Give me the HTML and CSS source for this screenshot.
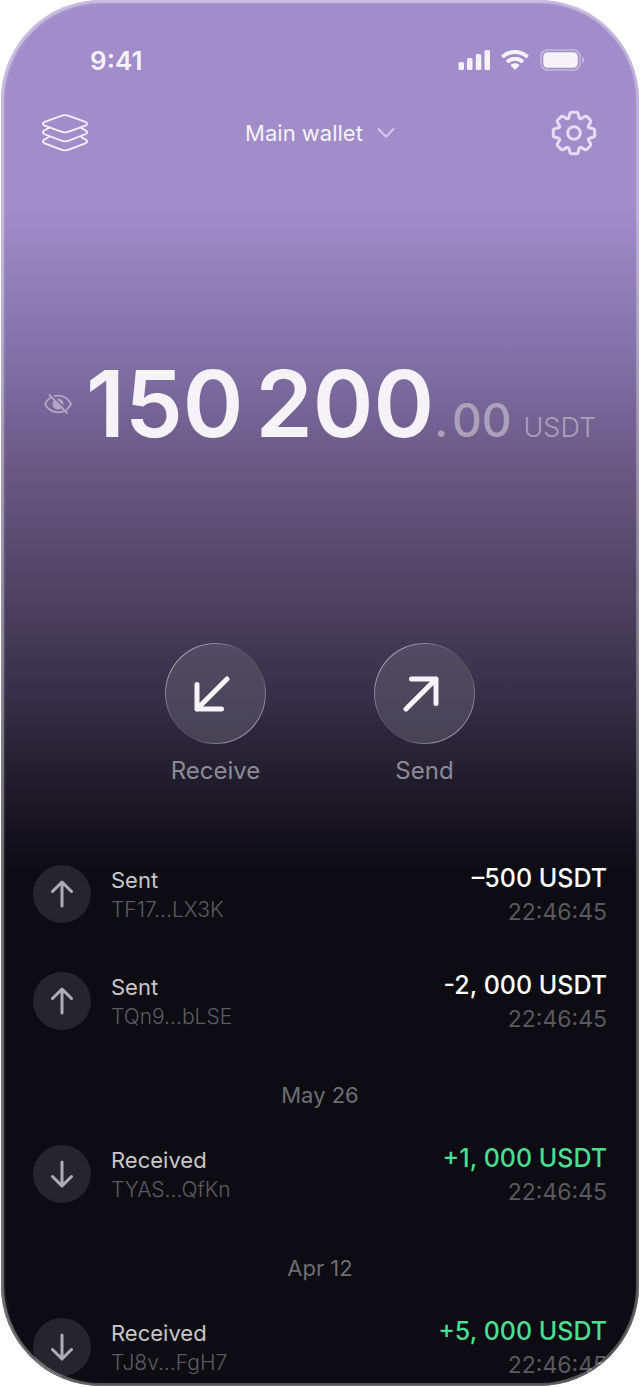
FILE: index.html
```html
<!DOCTYPE html>
<html lang="en">
<head>
    <meta charset="UTF-8">
    <meta name="viewport" content="width=device-width, initial-scale=1.0">
    <title>Main wallet</title>
    <link rel="stylesheet" href="styles.css">
</head>
<body>
    <!-- shared arrow icons -->
    <svg class="sprite" aria-hidden="true">
        <symbol id="arrow-up" viewBox="0 0 28 28">
            <path d="M14 26V2M4.500 11.500L14 2l9.500 9.500"/>
        </symbol>
        <symbol id="arrow-down" viewBox="0 0 28 28">
            <path d="M14 2v24M4.500 16.500L14 26l9.500-9.500"/>
        </symbol>
    </svg>

    <div class="phone">
        <div class="status-bar">
            <span class="time">9:41</span>
            <div class="status-icons">
                <svg width="32" height="22" viewBox="0 0 32 22" fill="currentColor">
                    <rect x="0.500" y="13" width="5.500" height="8" rx="1.600"/>
                    <rect x="9" y="9" width="5.500" height="12" rx="1.600"/>
                    <rect x="17.800" y="5" width="5.500" height="16" rx="1.600"/>
                    <rect x="26.500" y="1" width="5.500" height="20" rx="1.600"/>
                </svg>
                <svg width="28" height="22" viewBox="0 0 28 22" fill="currentColor">
                    <path d="M14 1C8.700 1 4 3 .5 6.300c-.3.300-.3.700 0 1l1.800 1.800c.3.300.7.300 1 0C6.200 6.500 10 5 14 5s7.800 1.500 10.700 4.100c.3.300.7.300 1 0l1.800-1.800c.3-.3.300-.7 0-1C24 3 19.300 1 14 1z"/>
                    <path d="M14 7.800c-3.400 0-6.500 1.300-8.800 3.400-.3.300-.3.700 0 1l1.900 1.900c.3.300.7.300 1 0 1.600-1.400 3.700-2.300 5.900-2.300s4.300.9 5.900 2.300c.3.300.7.300 1 0l1.900-1.900c.3-.3.300-.7 0-1-2.300-2.100-5.400-3.400-8.800-3.400z"/>
                    <path d="M14 14.300c-1.600 0-3 .6-4.100 1.500-.3.300-.3.700 0 1l3.600 3.800c.3.300.7.300 1 0l3.600-3.800c.3-.3.300-.7 0-1-1.100-.9-2.500-1.500-4.100-1.500z"/>
                </svg>
                <svg width="45" height="22" viewBox="0 0 45 22">
                    <rect x="1" y="1" width="39" height="20" rx="6.500" fill="none" stroke="currentColor" stroke-width="1.500" opacity="0.450"/>
                    <rect x="3.300" y="3.300" width="34.500" height="15.400" rx="4.300" fill="currentColor"/>
                    <path d="M42.300 7.800c1.200.6 2 1.800 2 3.200s-.8 2.600-2 3.200z" fill="currentColor" opacity="0.500"/>
                </svg>
            </div>
        </div>

        <header class="header">
            <button class="icon-btn" aria-label="Accounts">
                <svg width="48" height="42" viewBox="0 0 48 42" class="layers">
                    <path d="M20.200 3.900Q24 2.500 27.800 3.900L44.300 9.800Q48 11.700 44.300 13.600L27.800 19.700Q24 21.100 20.200 19.700L3.700 13.600Q0 11.700 3.700 9.800Z"/>
                    <path d="M7.800 15.900L3.700 18.300Q0 20.400 3.700 22.300L20.200 28.600Q24 30 27.800 28.600L44.300 22.300Q48 20.400 44.300 18.300L40.200 15.900"/>
                    <path d="M7.800 25L3.700 27.400Q0 29.400 3.700 31.400L20.200 37.700Q24 39.100 27.800 37.700L44.300 31.400Q48 29.400 44.300 27.400L40.200 25"/>
                </svg>
            </button>
            <button class="wallet-switch">
                Main wallet
                <svg width="18" height="12" viewBox="0 0 18 12"><path d="M1.500 2L9 9.800 16.500 2"/></svg>
            </button>
            <button class="icon-btn" aria-label="Settings">
                <svg width="46" height="46" viewBox="-23 -23 46 46" class="gear">
                    <path d="M-5.200-15.200L-4.200-19Q-3.800-20.700-2.400-20.700L2.400-20.700Q3.800-20.700 4.200-19L5.200-15.200Q6-14 7.100-14.400L10.500-16.400Q12-17.300 13-16.300L16.300-13Q17.300-12 16.400-10.500L14.400-7.100Q14-6 15.200-5.200L19-4.200Q20.700-3.800 20.700-2.400L20.700 2.400Q20.700 3.800 19 4.200L15.200 5.200Q14 6 14.400 7.100L16.400 10.500Q17.300 12 16.300 13L13 16.300Q12 17.300 10.500 16.400L7.100 14.400Q6 14 5.200 15.200L4.200 19Q3.800 20.700 2.400 20.700L-2.400 20.700Q-3.800 20.700-4.200 19L-5.200 15.200Q-6 14-7.100 14.400L-10.500 16.400Q-12 17.300-13 16.300L-16.300 13Q-17.300 12-16.400 10.500L-14.400 7.100Q-14 6-15.200 5.200L-19 4.200Q-20.700 3.800-20.700 2.400L-20.700-2.400Q-20.700-3.800-19-4.200L-15.200-5.200Q-14-6-14.400-7.100L-16.400-10.500Q-17.300-12-16.300-13L-13-16.300Q-12-17.300-10.500-16.400L-7.100-14.400Q-6-14-5.200-15.200Z"/>
                    <circle r="6.300"/>
                </svg>
            </button>
        </header>

        <section class="balance">
            <button class="hide-btn" aria-label="Hide balance">
                <svg width="28" height="20" viewBox="0 0 28 20" fill="none" stroke="currentColor" stroke-width="1.800" stroke-linecap="round">
                    <path d="M1 10C4 4.300 9 1.700 14 1.700S24 4.300 27 10C24 15.700 19 18.300 14 18.300S4 15.700 1 10z"/>
                    <circle cx="14" cy="10" r="5.500" fill="currentColor" stroke="none"/>
                    <path d="M7.500 1.500L20.500 15" class="eye-gap"/>
                    <path d="M5.500 1L23 19"/>
                </svg>
            </button>
            <p class="amount">
                <span class="whole"><span>150</span> <span>200</span></span>
                <span class="cents">.&hairsp;00</span>
                <span class="currency">USDT</span>
            </p>
        </section>

        <nav class="actions">
            <button class="action">
                <span class="action-circle">
                    <svg width="36" height="36" viewBox="0 0 36 36"><path d="M33 3L3 33M3 8.500V33H27.500"/></svg>
                </span>
                Receive
            </button>
            <button class="action">
                <span class="action-circle">
                    <svg width="36" height="36" viewBox="0 0 36 36"><path d="M3 33L33 3M8.500 3H33V27.500"/></svg>
                </span>
                Send
            </button>
        </nav>

        <main class="history">
            <ul class="tx-list">
                <li class="tx">
                    <span class="tx-icon"><svg width="28" height="28"><use href="#arrow-up"/></svg></span>
                    <div class="tx-info">
                        <span class="tx-title">Sent</span>
                        <span class="tx-address">TF17...LX3K</span>
                    </div>
                    <div class="tx-sum">
                        <span class="tx-value">–500 USDT</span>
                        <span class="tx-time">22:46:45</span>
                    </div>
                </li>
                <li class="tx">
                    <span class="tx-icon"><svg width="28" height="28"><use href="#arrow-up"/></svg></span>
                    <div class="tx-info">
                        <span class="tx-title">Sent</span>
                        <span class="tx-address">TQn9...bLSE</span>
                    </div>
                    <div class="tx-sum">
                        <span class="tx-value">-2, 000 USDT</span>
                        <span class="tx-time">22:46:45</span>
                    </div>
                </li>
            </ul>

            <h2 class="date">May 26</h2>
            <ul class="tx-list">
                <li class="tx">
                    <span class="tx-icon"><svg width="28" height="28"><use href="#arrow-down"/></svg></span>
                    <div class="tx-info">
                        <span class="tx-title">Received</span>
                        <span class="tx-address">TYAS...QfKn</span>
                    </div>
                    <div class="tx-sum">
                        <span class="tx-value income">+1, 000 USDT</span>
                        <span class="tx-time">22:46:45</span>
                    </div>
                </li>
            </ul>

            <h2 class="date">Apr 12</h2>
            <ul class="tx-list">
                <li class="tx">
                    <span class="tx-icon"><svg width="28" height="28"><use href="#arrow-down"/></svg></span>
                    <div class="tx-info">
                        <span class="tx-title">Received</span>
                        <span class="tx-address">TJ8v...FgH7</span>
                    </div>
                    <div class="tx-sum">
                        <span class="tx-value income">+5, 000 USDT</span>
                        <span class="tx-time">22:46:45</span>
                    </div>
                </li>
            </ul>
        </main>
    </div>
</body>
</html>
```
FILE: styles.css
```css
* {
    box-sizing: border-box;
}

body {
    margin: 0;
    background-color: #fff;
    color: #f5f3f8;
    font-family: Inter, "Liberation Sans", sans-serif;
}

button {
    padding: 0;
    border: none;
    background: none;
    color: inherit;
    font: inherit;
    cursor: pointer;
}

.sprite {
    display: none;
}

.phone {
    position: relative;
    margin: 0 1px 1px;
    padding: 44px 32px 7px;
    overflow: hidden;
    border-radius: 100px;
    background: linear-gradient(#a18dca 0, #a18dca 205px, #8373aa 345px, #6a5984 465px, #4a405e 610px, #352e45 700px, #211c2c 780px, #12101a 845px, #0d0c12 875px);
}

/* bevelled edge of the screen */
.phone::after {
    content: "";
    position: absolute;
    inset: 0;
    border-radius: inherit;
    box-shadow: inset 0 0 0 3px rgba(255, 255, 255, 0.26), inset 1px 1px 3px 2px rgba(255, 255, 255, 0.24);
    pointer-events: none;
}

/* status bar */
.status-bar {
    display: flex;
    align-items: center;
    justify-content: space-between;
    height: 32px;
    padding: 0 22px 0 57px;
}

.time {
    font-size: 26px;
    font-weight: 600;
}

.status-icons {
    display: flex;
    gap: 11px;
}

/* header */
.header {
    display: flex;
    align-items: center;
    justify-content: space-between;
    height: 46px;
    margin-top: 34px;
    padding: 0 10px 0 8px;
}

.icon-btn {
    display: flex;
}

.layers {
    fill: none;
    stroke: #f5f0fb;
    stroke-width: 1.8;
    stroke-linecap: round;
}

.gear {
    fill: none;
    stroke: #e6dcf5;
    stroke-width: 3;
    stroke-linejoin: round;
}

.wallet-switch {
    display: flex;
    align-items: center;
    gap: 14px;
    font-size: 22px;
}

.wallet-switch svg {
    fill: none;
    stroke: #d2c5e8;
    stroke-width: 2;
    stroke-linecap: round;
    stroke-linejoin: round;
}

/* balance */
.balance {
    display: flex;
    align-items: center;
    gap: 14px;
    height: 112px;
    margin-top: 192px;
    padding-left: 11px;
}

.hide-btn {
    display: flex;
    color: #b2a7c6;
}

.eye-gap {
    stroke: #75669a;
    stroke-width: 3;
}

.amount {
    display: flex;
    align-items: baseline;
    margin: 0;
    padding-top: 24px;
    line-height: 90px;
    white-space: nowrap;
}

.whole {
    display: flex;
    gap: 12px;
    font-size: 92px;
    font-weight: 600;
}

.cents {
    color: #aca1bd;
    font-size: 46px;
    font-weight: 500;
}

.currency {
    margin-left: 12px;
    color: #aca1bd;
    font-size: 27px;
    font-weight: 300;
}

/* actions */
.actions {
    display: flex;
    justify-content: center;
    gap: 108px;
    margin-top: 183px;
}

.action {
    display: flex;
    flex-direction: column;
    align-items: center;
    gap: 12px;
    width: 101px;
    color: #8d8a97;
    font-size: 24px;
    line-height: 30px;
}

.action-circle {
    display: flex;
    align-items: center;
    justify-content: center;
    width: 101px;
    height: 101px;
    padding-right: 8px;
    border: 1px solid transparent;
    border-radius: 50%;
    background:
        linear-gradient(#524b63, #464354) padding-box,
        linear-gradient(135deg, #b5b0c6 10%, #5d5670 42%, #4d485b 60%, #a9a5b8 90%) border-box;
}

.action-circle svg {
    fill: none;
    stroke: #f7f3fa;
    stroke-width: 5;
    stroke-linecap: round;
    stroke-linejoin: round;
}

/* history */
.history {
    margin-top: 76px;
}

.tx-list {
    display: grid;
    gap: 43px;
    margin: 0;
    padding: 0;
    list-style: none;
}

.tx {
    display: flex;
    align-items: center;
    height: 64px;
}

.tx-icon {
    display: flex;
    flex: none;
    align-items: center;
    justify-content: center;
    width: 58px;
    height: 58px;
    margin-right: 20px;
    border-radius: 50%;
    background-color: #26252c;
}

.tx-icon svg {
    fill: none;
    stroke: #aeadb3;
    stroke-width: 3;
    stroke-linecap: round;
    stroke-linejoin: round;
}

.tx-info {
    display: flex;
    flex: 1;
    flex-direction: column;
    padding-top: 2px;
    font-size: 22px;
    line-height: 30px;
}

.tx-title {
    color: #c8c7cb;
}

.tx-address {
    color: #5c5b61;
    font-size: 21px;
    font-weight: 300;
}

.tx-sum {
    display: flex;
    flex-direction: column;
    padding-top: 2px;
    text-align: right;
    line-height: 34px;
}

.tx-value {
    color: #fff;
    font-size: 25px;
    font-weight: 500;
}

.tx-value.income {
    color: #4ade93;
}

.tx-time {
    color: #5a595f;
    font-size: 23px;
}

.date {
    margin: 47px 0 32px;
    color: #6e6d73;
    font-size: 22px;
    font-weight: 400;
    line-height: 30px;
    text-align: center;
}
```
